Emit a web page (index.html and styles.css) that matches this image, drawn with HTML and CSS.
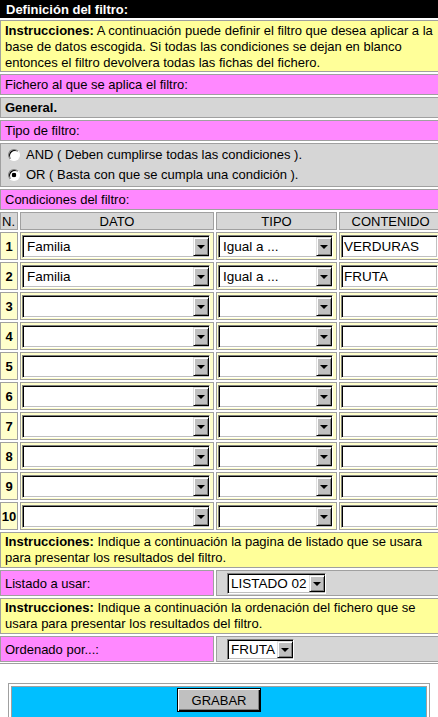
FILE: index.html
```html
<!DOCTYPE html>
<html lang="es">
<head>
    <meta charset="UTF-8">
    <meta name="viewport" content="width=device-width, initial-scale=1.0">
    <title>Definición del filtro</title>
    <link rel="stylesheet" href="styles.css">
</head>
<body>
    <div class="filtro">
        <div class="celda ancho titulo">Definición del filtro:</div>
        <div class="celda ancho instr primera"><b>Instrucciones:</b> A continuación puede definir el filtro que desea aplicar a la base de datos escogida. Si todas las condiciones se dejan en blanco entonces el filtro devolvera todas las fichas del fichero.</div>
        <div class="celda ancho rosa">Fichero al que se aplica el filtro:</div>
        <div class="celda ancho gris"><b>General.</b></div>
        <div class="celda ancho rosa">Tipo de filtro:</div>
        <div class="celda ancho gris opciones">
            <label class="opcion"><span class="radio"></span>AND ( Deben cumplirse todas las condiciones ).</label>
            <label class="opcion"><span class="radio marcado"></span>OR ( Basta con que se cumpla una condición ).</label>
        </div>
        <div class="celda ancho rosa">Condiciones del filtro:</div>

        <!-- cabecera de condiciones -->
        <div class="celda gris cab izq">N.</div>
        <div class="celda gris cab">DATO</div>
        <div class="celda gris cab">TIPO</div>
        <div class="celda gris cab">CONTENIDO</div>

        <div class="celda num">1</div>
        <div class="celda campo"><div class="combo"><span class="valor">Familia</span><span class="flecha"></span></div></div>
        <div class="celda campo"><div class="combo"><span class="valor">Igual a ...</span><span class="flecha"></span></div></div>
        <div class="celda campo"><input class="texto" type="text" value="VERDURAS"></div>

        <div class="celda num">2</div>
        <div class="celda campo"><div class="combo"><span class="valor">Familia</span><span class="flecha"></span></div></div>
        <div class="celda campo"><div class="combo"><span class="valor">Igual a ...</span><span class="flecha"></span></div></div>
        <div class="celda campo"><input class="texto" type="text" value="FRUTA"></div>

        <div class="celda num">3</div>
        <div class="celda campo"><div class="combo"><span class="valor"></span><span class="flecha"></span></div></div>
        <div class="celda campo"><div class="combo"><span class="valor"></span><span class="flecha"></span></div></div>
        <div class="celda campo"><input class="texto" type="text"></div>

        <div class="celda num">4</div>
        <div class="celda campo"><div class="combo"><span class="valor"></span><span class="flecha"></span></div></div>
        <div class="celda campo"><div class="combo"><span class="valor"></span><span class="flecha"></span></div></div>
        <div class="celda campo"><input class="texto" type="text"></div>

        <div class="celda num">5</div>
        <div class="celda campo"><div class="combo"><span class="valor"></span><span class="flecha"></span></div></div>
        <div class="celda campo"><div class="combo"><span class="valor"></span><span class="flecha"></span></div></div>
        <div class="celda campo"><input class="texto" type="text"></div>

        <div class="celda num">6</div>
        <div class="celda campo"><div class="combo"><span class="valor"></span><span class="flecha"></span></div></div>
        <div class="celda campo"><div class="combo"><span class="valor"></span><span class="flecha"></span></div></div>
        <div class="celda campo"><input class="texto" type="text"></div>

        <div class="celda num">7</div>
        <div class="celda campo"><div class="combo"><span class="valor"></span><span class="flecha"></span></div></div>
        <div class="celda campo"><div class="combo"><span class="valor"></span><span class="flecha"></span></div></div>
        <div class="celda campo"><input class="texto" type="text"></div>

        <div class="celda num">8</div>
        <div class="celda campo"><div class="combo"><span class="valor"></span><span class="flecha"></span></div></div>
        <div class="celda campo"><div class="combo"><span class="valor"></span><span class="flecha"></span></div></div>
        <div class="celda campo"><input class="texto" type="text"></div>

        <div class="celda num">9</div>
        <div class="celda campo"><div class="combo"><span class="valor"></span><span class="flecha"></span></div></div>
        <div class="celda campo"><div class="combo"><span class="valor"></span><span class="flecha"></span></div></div>
        <div class="celda campo"><input class="texto" type="text"></div>

        <div class="celda num">10</div>
        <div class="celda campo"><div class="combo"><span class="valor"></span><span class="flecha"></span></div></div>
        <div class="celda campo"><div class="combo"><span class="valor"></span><span class="flecha"></span></div></div>
        <div class="celda campo"><input class="texto" type="text"></div>

        <div class="celda ancho instr"><b>Instrucciones:</b> Indique a continuación la pagina de listado que se usara para presentar los resultados del filtro.</div>
        <div class="celda doble rosa fila-combo">Listado a usar:</div>
        <div class="celda doble gris fila-combo"><div class="combo corto listado"><span class="valor">LISTADO 02</span><span class="flecha"></span></div></div>

        <div class="celda ancho instr"><b>Instrucciones:</b> Indique a continuación la ordenación del fichero que se usara para presentar los resultados del filtro.</div>
        <div class="celda doble rosa fila-combo">Ordenado por...:</div>
        <div class="celda doble gris fila-combo"><div class="combo corto"><span class="valor">FRUTA</span><span class="flecha"></span></div></div>
    </div>

    <div class="pie">
        <div class="pie-celda">
            <button class="grabar" type="button">GRABAR</button>
        </div>
    </div>
</body>
</html>
```

FILE: styles.css
```css
html, body {
    margin: 0;
    overflow: hidden;
    background: #fff;
}
body {
    font-family: "Liberation Sans", Arial, sans-serif;
    font-size: 13px;
    color: #000;
}
.filtro {
    width: 442px;
    display: grid;
    grid-template-columns: 18px 194px 121px 1fr;
    gap: 2px;
    padding-bottom: 1px;
    border-bottom: 1px solid #a0a0a0;
}
.celda {
    border: 1px solid #a0a0a0;
    padding: 2px 4px;
    line-height: 15px;
    box-sizing: border-box;
}
.ancho {
    grid-column: 1 / -1;
}
.doble {
    grid-column: span 2;
}
.titulo {
    background: #000;
    border-color: #000;
    color: #fff;
    font-weight: bold;
    padding: 1px 5px 0;
}
.instr {
    background: #ffff99;
    line-height: 16px;
    padding: 1px 4px;
}
.instr.primera {
    padding: 2px 4px 0;
}
.rosa {
    background: #ff88ff;
}
.gris {
    background: #d6d6d6;
}
.opciones {
    padding: 1px 4px;
}
.opcion {
    display: flex;
    align-items: center;
    gap: 6px;
    line-height: 20px;
    margin-left: 3px;
}
.radio {
    width: 12px;
    height: 12px;
    box-sizing: border-box;
    border-radius: 50%;
    border: 1px solid;
    border-color: #808080 #fff #fff #808080;
    background: #fff;
    box-shadow: inset 1px 1px 0 #000;
}
.radio.marcado {
    background: radial-gradient(circle, #000 0 2px, #fff 2.6px);
}
.cab {
    text-align: center;
    padding: 1px 2px 0;
}
.cab.izq {
    text-align: left;
    padding-left: 1px;
}
.num {
    background: #ffffcc;
    font-weight: bold;
    font-size: 13px;
    display: flex;
    align-items: center;
    justify-content: center;
    padding: 0;
}
.campo {
    background: #ffffcc;
    padding: 2px 3px 1px 1px;
}
.combo {
    display: flex;
    height: 23px;
    box-sizing: border-box;
    background: #fff;
    border: 1px solid;
    border-color: #808080 #fff #fff #808080;
    box-shadow: inset 1px 1px 0 #000, inset -1px -1px 0 #c0c0c0;
    font-size: 13.5px;
}
.valor {
    flex: 1;
    padding-left: 4px;
    line-height: 21px;
    white-space: nowrap;
    overflow: hidden;
}
.flecha {
    width: 16px;
    margin: 1px 0 1px 0;
    box-sizing: border-box;
    background: #c0c0c0;
    border: 1px solid;
    border-color: #dfdfdf #000 #000 #dfdfdf;
    box-shadow: inset 1px 1px 0 #fff, inset -1px -1px 0 #808080;
    display: flex;
    align-items: center;
    justify-content: center;
}
.flecha::after {
    content: "";
    border-left: 4px solid transparent;
    border-right: 4px solid transparent;
    border-top: 4px solid #000;
}
.texto {
    display: block;
    width: 100%;
    height: 23px;
    box-sizing: border-box;
    margin: 0;
    padding: 0 2px;
    border: 1px solid;
    border-color: #808080 #fff #fff #808080;
    box-shadow: inset 1px 1px 0 #000, inset -1px -1px 0 #c0c0c0;
    font-family: "Liberation Sans", Arial, sans-serif;
    font-size: 13.5px;
    outline: none;
}
.fila-combo {
    padding: 2px 4px 1px;
    line-height: 21px;
}
.combo.corto {
    display: inline-flex;
    height: 21px;
    margin-left: 6px;
    vertical-align: top;
}
.combo.corto .valor {
    line-height: 19px;
    padding-left: 3px;
    padding-right: 2px;
}
.pie {
    margin: 19px 8px 0;
    border: 1px solid #a0a0a0;
    padding: 2px;
}
.pie-celda {
    background: #00bfff;
    border: 1px solid #a0a0a0;
    padding: 1px 1px 6px;
    text-align: center;
}
.grabar {
    width: 84px;
    height: 24px;
    background: #c0c0c0;
    border: 1px solid #000;
    box-shadow: inset 1px 1px 0 #fff, inset -1px -1px 0 #000, inset -2px -2px 0 #808080;
    font-family: "Liberation Sans", Arial, sans-serif;
    font-size: 13px;
    color: #000;
    padding: 0;
}
```
